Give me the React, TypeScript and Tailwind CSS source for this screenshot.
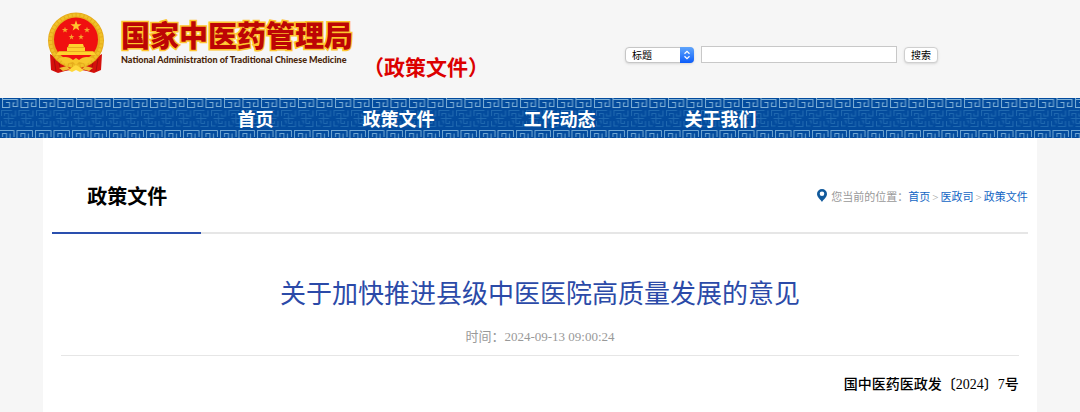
import { FormEvent, useState } from "react";

const NAV_ITEMS = ["首页", "政策文件", "工作动态", "关于我们"];
const CRUMBS = ["首页", "医政司", "政策文件"];

const STAR =
  "M0 -5 L1.2 -1.6 L4.8 -1.5 L1.9 0.6 L2.9 4 L0 2 L-2.9 4 L-1.9 0.6 L-4.8 -1.5 L-1.2 -1.6 Z";

function Emblem() {
  return (
    <svg className="h-[62px] w-[58px] shrink-0" viewBox="0 0 58 62" aria-hidden="true">
      {/* ribbons */}
      <path d="M3 42 L16 49 L42 49 L55 42 L54 58 L47 61 L40 59 L29 57 L18 59 L11 61 L4 58 Z" fill="#d5100c" />
      <path d="M7 47 l2 12 M51 47 l-2 12 M12 51 l2 8 M46 51 l-2 8" stroke="#a90d0b" strokeWidth="1" />
      {/* wheat ring */}
      <circle cx="29" cy="28.5" r="28" fill="#e6ab1c" />
      <circle cx="29" cy="28.5" r="25.5" fill="none" stroke="#f0c128" strokeWidth="3" strokeDasharray="3 1" />
      <circle cx="29" cy="27.5" r="22" fill="#f01010" />
      <path d={STAR} fill="#ffc52e" transform="translate(29 14) scale(1.15)" />
      <path d={STAR} fill="#f5a52b" transform="translate(18 18) scale(.65)" />
      <path d={STAR} fill="#f5a52b" transform="translate(40 18) scale(.65)" />
      <path d={STAR} fill="#f5a52b" transform="translate(24.5 25) scale(.6)" />
      <path d={STAR} fill="#f5a52b" transform="translate(34 25) scale(.6)" />
      {/* gate */}
      <path d="M22 32 H36 L37 35 H21 Z M20 35 H38 V39 H20 Z M12 39 H46 L49 43 H9 Z" fill="#ffd22d" />
      <path d="M20 35.5 H38 M12 39.5 H46" stroke="#df9a18" strokeWidth=".7" />
      {/* gear and tassels */}
      <path d="M12 46 Q21 43 26 48 L29 46 L32 48 Q37 43 46 46 L40 52 L32 50 L29 53 L26 50 L18 52 Z" fill="#f7c62b" />
      <path d="M21 58 L29 53 L37 58 L33 60 L29 58 L25 60 Z" fill="#ffd83b" />
      <path d="M12 56 l8 -2 l3 3 l-7 2 Z M46 56 l-8 -2 l-3 3 l7 2 Z" fill="#f0bd32" />
    </svg>
  );
}

function FretBackground() {
  return (
    <svg className="absolute inset-0 h-full w-full" aria-hidden="true">
      <defs>
        <pattern id="fret-top" x="1" y="0" width="18.5" height="10" patternUnits="userSpaceOnUse">
          <path
            d="M1.5 0 V9.5 H8.5 V4.5 H5 M1 1.5 H16.5 V8.5 H12 V5 H14"
            fill="none"
            stroke="#7fb0d6"
            strokeWidth="1"
          />
        </pattern>
        <pattern id="fret-bottom" x="-3" y="31" width="18.5" height="12" patternUnits="userSpaceOnUse">
          <path
            d="M1.5 10 V1.5 H17 M5 4.5 H9.5 V10 M5.5 4.5 V8 M13 10 V4.5 M17 1.5 V8"
            fill="none"
            stroke="#6fa6d2"
            strokeWidth="1"
          />
        </pattern>
        <pattern id="fret-middle" y="11" width="17.5" height="18" patternUnits="userSpaceOnUse">
          <path
            d="M3.5 9.5 H14 M8.5 4.5 V14.5 M1.5 7 V1.5 H12 M4.5 7 V4.5 H8.5 M15.5 1.5 V7 H11.5 V4.5 M1.5 12 V17 H5.5 M4.5 12 H6 V14.5 M8.5 14.5 H12 V12 M15.5 12 V17.5 H8"
            fill="none"
            stroke="#2069b0"
            strokeWidth="1"
          />
        </pattern>
      </defs>
      <rect width="100%" height="10" fill="url(#fret-top)" />
      <rect y="11" width="100%" height="18" fill="url(#fret-middle)" />
      <rect y="31" width="100%" height="9" fill="url(#fret-bottom)" />
    </svg>
  );
}

function SearchForm() {
  const [field, setField] = useState("title");
  const [keyword, setKeyword] = useState("");

  const onSubmit = (e: FormEvent) => {
    e.preventDefault();
  };

  return (
    <form
      onSubmit={onSubmit}
      className="ml-auto mt-[46px] flex h-[17px] items-center font-['Noto_Sans_CJK_SC',sans-serif] text-[10px] text-black"
    >
      <div className="relative h-4 w-[69px]">
        <select
          aria-label="搜索范围"
          value={field}
          onChange={(e) => setField(e.target.value)}
          className="block h-4 w-full appearance-none rounded-[4px] border border-[#c6c6c6] bg-white pl-1.5 leading-[14px] shadow-sm"
        >
          <option value="title">标题</option>
          <option value="content">正文</option>
        </select>
        <span className="pointer-events-none absolute inset-y-0 right-0 flex w-[14px] items-center justify-center rounded-r-[4px] bg-gradient-to-b from-[#5fa4fb] to-[#0a5bfa]">
          <svg className="h-[10px] w-2" viewBox="0 0 8 10" fill="none" stroke="#fff" strokeWidth="1.2">
            <path d="M1.5 3.7 L4 1.3 L6.5 3.7 M1.5 6.3 L4 8.7 L6.5 6.3" />
          </svg>
        </span>
      </div>
      <input
        type="text"
        aria-label="关键词"
        value={keyword}
        onChange={(e) => setKeyword(e.target.value)}
        className="ml-[7px] h-[17px] w-[196px] border border-[#c8c8c8] bg-white px-1 outline-none"
      />
      <button
        type="submit"
        className="ml-[7px] h-4 w-[34px] rounded-[4px] border border-[#cfcfcf] bg-white leading-[14px] shadow-sm"
      >
        搜索
      </button>
    </form>
  );
}

export default function App() {
  return (
    <div className="min-h-screen bg-[#f6f6f6] font-['Liberation_Serif','Noto_Sans_CJK_SC',serif]">
      {/* Header */}
      <header className="flex h-[98px] items-start pl-[47px] pr-[142px]">
        <div className="mt-3">
          <Emblem />
        </div>
        <div className="ml-4 mt-4 shrink-0">
          <div className="whitespace-nowrap font-['Noto_Sans_CJK_SC',sans-serif] text-[29px] font-black leading-9 text-[#bd0505] [-webkit-text-stroke:3px_#ffc52e] [paint-order:stroke_fill]">
            国家中医药管理局
          </div>
          <div className="whitespace-nowrap font-['Lato',sans-serif] text-[9px] font-black leading-4 text-[#4a2508]">
            National Administration of Traditional Chinese Medicine
          </div>
        </div>
        <div className="ml-[10px] mt-[54px] whitespace-nowrap text-[21px] font-bold leading-7 text-[#dc0000]">
          （政策文件）
        </div>
        <SearchForm />
      </header>

      {/* Navigation */}
      <nav className="relative h-10 bg-[#034b9d]">
        <FretBackground />
        <ul className="relative flex h-full items-center gap-[89px] pl-[22%] pt-[3px] text-[18px] font-bold leading-6 text-white">
          {NAV_ITEMS.map((item) => (
            <li key={item}>
              <a href="#" className="whitespace-nowrap">
                {item}
              </a>
            </li>
          ))}
        </ul>
      </nav>

      {/* Content */}
      <main className="mx-auto min-h-[274px] w-[92%] bg-white px-[9px]">
        <div className="flex h-24 items-stretch justify-between border-b-2 border-[#e6e6e6]">
          <h2 className="-mb-0.5 w-[149px] border-b-2 border-[#2a4fae] pl-[35px] pt-11 text-[20px] font-bold leading-[30px] text-black">
            政策文件
          </h2>
          <div className="mt-[50px] flex h-[18px] items-center text-[11px] leading-[18px] text-[#999]">
            <svg className="mb-1 mr-1 h-[13px] w-[10px]" viewBox="0 0 10 13" aria-hidden="true">
              <path
                fillRule="evenodd"
                d="M5 0 A5 5 0 0 1 10 5 C10 8 6.5 10.5 5 13 C3.5 10.5 0 8 0 5 A5 5 0 0 1 5 0 Z M5 2.5 A2.3 2.3 0 1 0 5 7.1 A2.3 2.3 0 1 0 5 2.5 Z"
                fill="#125a9c"
              />
            </svg>
            <span className="whitespace-nowrap">您当前的位置：</span>
            {CRUMBS.map((crumb, i) => (
              <span key={crumb} className="whitespace-nowrap">
                {i > 0 && <span className="px-0.5">&gt;</span>}
                <a href="#" className="text-[#1265c4]">
                  {crumb}
                </a>
              </span>
            ))}
          </div>
        </div>

        <article className="px-[9px]">
          <h1 className="pt-[41px] text-center text-[26px] leading-10 text-[#2b4aa8]">
            关于加快推进县级中医医院高质量发展的意见
          </h1>
          <p className="mt-3 border-b border-[#e6e6e6] pb-2 text-center text-[13px] leading-5 text-[#999]">
            时间：2024-09-13 09:00:24
          </p>
          <p className="mt-[17px] text-right text-[14px] font-medium leading-6 text-black">
            国中医药医政发〔2024〕7号
          </p>
        </article>
      </main>
    </div>
  );
}
